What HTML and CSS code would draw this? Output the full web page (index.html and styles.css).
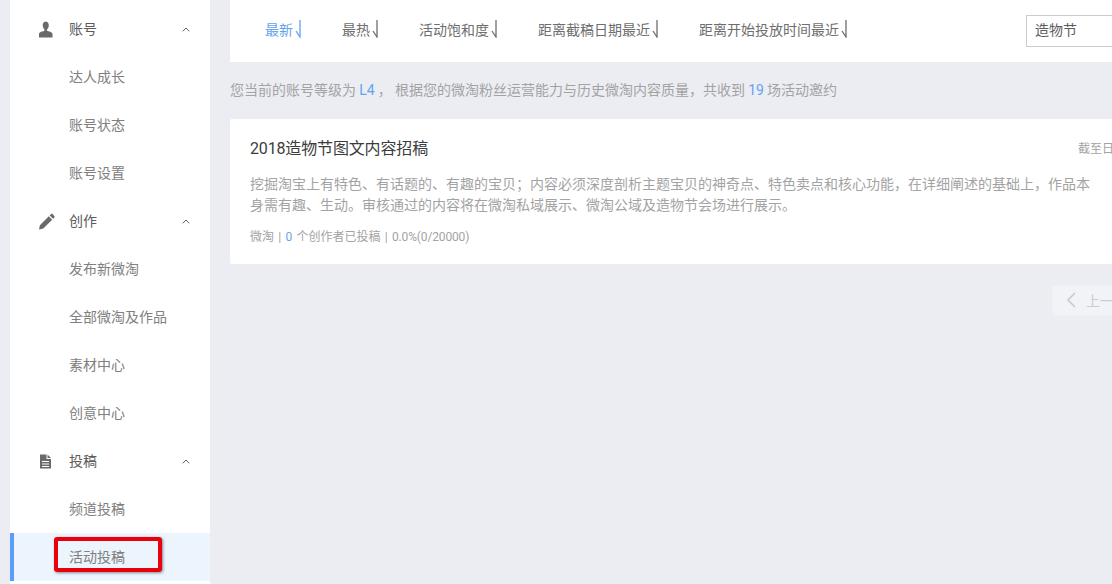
FILE: index.html
```html
<!DOCTYPE html>
<html lang="zh-CN">
<head>
<meta charset="utf-8">
<title>活动投稿</title>
<link rel="stylesheet" href="styles.css">
</head>
<body>
<div class="page">
  <aside class="sidebar">
    <div class="nav-head">
      <svg class="nav-icon" viewBox="0 0 19 19"><path d="M9.500 2.500c2 0 3.300 1.500 3.300 3.700 0 1.900-.9 3.500-1.800 4.200v1.300c1.500.4 5.500 1.200 5.500 3.300v3.500H3V15c0-2.100 4-2.900 5.500-3.300v-1.300c-.9-.7-1.800-2.300-1.800-4.200 0-2.200 1.300-3.700 3.300-3.700z"/></svg>
      <span class="nav-title">账号</span>
      <svg class="nav-caret" viewBox="0 0 8 5"><path d="M.7 4.300 4 1l3.300 3.300"/></svg>
    </div>
    <a class="nav-item">达人成长</a>
    <a class="nav-item">账号状态</a>
    <a class="nav-item">账号设置</a>
    <div class="nav-head">
      <svg class="nav-icon" viewBox="0 0 19 19"><path d="M3 18.500l.9-4.300L12.800 5.300l3.400 3.400-8.900 8.900zM13.700 4.400l1.300-1.300c.4-.4 1-.4 1.400 0l2 2c.4.4.4 1 0 1.400l-1.300 1.300z"/></svg>
      <span class="nav-title">创作</span>
      <svg class="nav-caret" viewBox="0 0 8 5"><path d="M.7 4.300 4 1l3.300 3.300"/></svg>
    </div>
    <a class="nav-item">发布新微淘</a>
    <a class="nav-item">全部微淘及作品</a>
    <a class="nav-item">素材中心</a>
    <a class="nav-item">创意中心</a>
    <div class="nav-head">
      <svg class="nav-icon" viewBox="0 0 19 19"><path fill-rule="evenodd" d="M4 3.500h6.500V8H15v9.500H4zM6 10v1h7v-1zM6 12.500v1h7v-1zM6 15v1h7v-1zM11.500 3.500 15 7h-3.500z"/></svg>
      <span class="nav-title">投稿</span>
      <svg class="nav-caret" viewBox="0 0 8 5"><path d="M.7 4.300 4 1l3.300 3.300"/></svg>
    </div>
    <a class="nav-item">频道投稿</a>
    <a class="nav-item is-active">活动投稿<span class="callout"></span></a>
  </aside>

  <main class="main">
    <div class="toolbar">
      <a class="sort is-current">最新<svg class="harpoon" viewBox="0 0 10 18"><path d="M7 0v17L3 11"/></svg></a>
      <a class="sort">最热<svg class="harpoon" viewBox="0 0 10 18"><path d="M7 0v17L3 11"/></svg></a>
      <a class="sort">活动饱和度<svg class="harpoon" viewBox="0 0 10 18"><path d="M7 0v17L3 11"/></svg></a>
      <a class="sort">距离截稿日期最近<svg class="harpoon" viewBox="0 0 10 18"><path d="M7 0v17L3 11"/></svg></a>
      <a class="sort">距离开始投放时间最近<svg class="harpoon" viewBox="0 0 10 18"><path d="M7 0v17L3 11"/></svg></a>
      <input class="search" type="text" value="造物节">
    </div>

    <p class="hint">您当前的账号等级为 <b>L4</b> ， 根据您的微淘粉丝运营能力与历史微淘内容质量，共收到 <b>19</b> 场活动邀约</p>

    <section class="card">
      <header class="card-head">
        <h2 class="card-title">2018造物节图文内容招稿</h2>
        <span class="card-date">截至日期：2018-10-31</span>
      </header>
      <p class="card-desc">挖掘淘宝上有特色、有话题的、有趣的宝贝；内容必须深度剖析主题宝贝的神奇点、特色卖点和核心功能，在详细阐述的基础上，作品本身需有趣、生动。审核通过的内容将在微淘私域展示、微淘公域及造物节会场进行展示。</p>
      <p class="card-meta">微淘 | <b>0</b> 个创作者已投稿 | <span class="card-ratio">0.0%(0/20000)</span></p>
    </section>

    <nav class="pager">
      <a class="pager-btn"><svg class="pager-chevron" viewBox="0 0 10 16"><path d="M9 1 2 8l7 7"/></svg>上一页</a>
    </nav>
  </main>
</div>
</body>
</html>
```
FILE: styles.css
```css
* { box-sizing: border-box; }
html, body { margin: 0; height: 100%; }
body {
  background: #ebedf3;
  overflow: hidden;
  font-family: Roboto, "Noto Sans CJK SC", sans-serif;
  font-size: 14px;
  color: #666;
}
.page { display: flex; width: 1240px; height: 584px; padding-left: 10px; }

.sidebar { flex: none; width: 200px; height: 584px; padding-top: 5px; background: #fff; }
.nav-head, .nav-item { display: flex; align-items: center; height: 48px; padding-bottom: 2px; }
.nav-head { padding-left: 26px; color: #5c5c5c; }
.nav-icon { width: 19px; height: 19px; fill: #6a6a6a; flex: none; }
.nav-title { margin-left: 14px; }
.nav-caret { width: 8px; height: 5px; margin: 2px 20px 0 auto; fill: none; stroke: #666; stroke-width: 1; }
.nav-item { position: relative; padding-left: 59px; color: #808080; }
.nav-item.is-active { padding-left: 55px; background: #ecf4fd; border-left: 4px solid #5b9dfa; }
.callout {
  position: absolute;
  left: 40px; top: 4px;
  width: 108px; height: 35px;
  border: 4px solid #e8000b;
  border-radius: 3px;
  box-shadow: 1px 1px 3px rgba(0, 0, 0, .45);
}

.main { flex: none; width: 1000px; margin-left: 20px; }
.toolbar { display: flex; align-items: center; gap: 39px; height: 62px; padding: 0 20px 0 35px; background: #fff; }
.sort { display: flex; align-items: center; padding-bottom: 4px; color: #6e6e6e; }
.sort.is-current { color: #64a3ee; }
.harpoon { width: 10px; height: 18px; fill: none; stroke: currentColor; stroke-width: 1.300; }
.search {
  width: 184px; height: 32px; margin-left: auto; padding: 0 8px 5px;
  border: 1px solid #ccc; border-radius: 0; outline: none;
  font: inherit; color: #5c5c5c; background: #fff;
}

.hint { margin: 0; height: 57px; padding-top: 18px; line-height: 20px; word-spacing: -.3px; color: #a3a3a3; }
.hint b, .card-meta b { font-weight: 400; color: #64a3ee; }

.card { height: 145px; padding: 18px 20px 0; background: #fff; border-radius: 2px; }
.card-head { display: flex; justify-content: space-between; align-items: center; height: 20px; }
.card-title { margin: 0; font-size: 16px; font-weight: 400; letter-spacing: -.15px; color: #3c3c3c; }
.card-date { font-size: 12px; color: #a3a3a3; width: 132px; }
.card-desc { width: 850px; margin: 17px 0 0; line-height: 21px; color: #a3a3a3; }
.card-meta { margin: 12px 0 0; font-size: 12px; line-height: 18px; word-spacing: 1.300px; color: #a3a3a3; }
.card-ratio { letter-spacing: -.15px; }

.pager { padding: 21px 0 0 822px; }
.pager-btn {
  display: flex; align-items: center; width: 120px; height: 31px; padding: 0 0 1px 13px;
  background: #f2f3f6; border: 1px solid #eeeff3; border-radius: 3px; color: #ccc;
}
.pager-chevron { width: 10px; height: 16px; margin-right: 10px; fill: none; stroke: #c8c8c8; stroke-width: 1.500; }
```
